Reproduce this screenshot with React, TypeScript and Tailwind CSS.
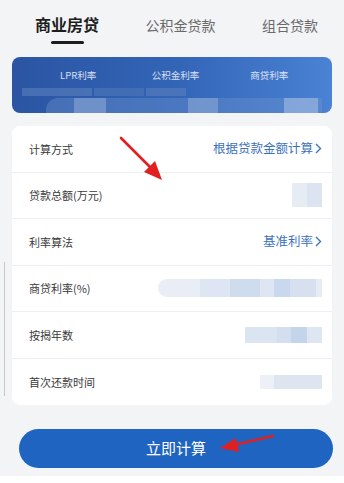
import React from "react";

const rows = [
  { label: "计算方式", value: "根据贷款金额计算", kind: "link" },
  { label: "贷款总额(万元)", kind: "amount" },
  { label: "利率算法", value: "基准利率", kind: "link" },
  { label: "商贷利率(%)", kind: "rate" },
  { label: "按揭年数", kind: "years" },
  { label: "首次还款时间", kind: "date" },
];

const Chevron = () => (
  <svg width="7" height="11" viewBox="0 0 7 11" className="ml-[2px]">
    <path d="M1 1l4.5 4.5L1 10" fill="none" stroke="#3c74c0" strokeWidth="1.4" />
  </svg>
);

const RowValue = ({ kind, value }: { kind: string; value?: string }) => {
  if (kind === "link") {
    return (
      <div className="flex items-center text-[12.5px] text-[#3c72bc]">
        {value}
        <Chevron />
      </div>
    );
  }
  if (kind === "amount") {
    return (
      <div className="flex h-[24px] w-[30px]">
        <div className="flex-1 bg-[#e6ecf4]" />
        <div className="flex-1 bg-[#dbe4f0]" />
      </div>
    );
  }
  if (kind === "rate") {
    return (
      <div className="flex h-[18px] w-[164px] overflow-hidden rounded-l-full">
        <div className="w-[42px] bg-[#e9eef6]" />
        <div className="w-[30px] bg-[#dde6f2]" />
        <div className="w-[30px] bg-[#cfdcee]" />
        <div className="w-[14px] bg-[#dde6f2]" />
        <div className="w-[16px] bg-[#c9d8ec]" />
        <div className="w-[26px] bg-[#d6e0ef]" />
        <div className="flex-1 bg-[#e6ecf5]" />
      </div>
    );
  }
  if (kind === "years") {
    return (
      <div className="flex h-[16px] w-[77px]">
        <div className="w-[32px] bg-[#dbe4f1]" />
        <div className="w-[14px] bg-[#d3def0]" />
        <div className="w-[16px] bg-[#c4d4eb]" />
        <div className="flex-1 bg-[#dde6f2]" />
      </div>
    );
  }
  return (
    <div className="flex h-[14px] w-[62px]">
      <div className="w-[14px] bg-[#edf1f7]" />
      <div className="flex-1 bg-[#dde5f1]" />
    </div>
  );
};

export default function App() {
  return (
    <div
      className="relative h-[483px] w-[344px] overflow-hidden bg-white"
      style={{ fontFamily: '"Noto Sans CJK SC", "Noto Sans", sans-serif' }}
    >
      <div className="bg-[#f3f4f6] pb-[8px]">
        {/* tabs */}
        <div className="flex h-[57px] items-start justify-between pl-[35px] pr-[26px] pt-[13px]">
          <div className="flex flex-col items-center">
            <span className="text-[16px] font-bold leading-[22px] text-[#1e1e1e]">商业房贷</span>
            <span className="mt-[6px] h-[3px] w-[33px] rounded-full bg-[#1e1e1e]" />
          </div>
          <span className="mt-[2px] text-[14px] leading-[20px] text-[#6a6a6a]">公积金贷款</span>
          <span className="mt-[2px] text-[14px] leading-[20px] text-[#6a6a6a]">组合贷款</span>
        </div>

        {/* banner */}
        <div className="mx-3 h-[56px] overflow-hidden rounded-lg bg-gradient-to-r from-[#2b55a3] via-[#3264b6] to-[#4a82d4]">
          <div className="grid grid-cols-3 pt-[11px] text-[9.5px] leading-[14px] text-white/80">
            <span className="pl-[48px]">LPR利率</span>
            <span className="pl-[33px]">公积金利率</span>
            <span className="pl-[25px]">商贷利率</span>
          </div>
          <div className="mt-[6px] flex items-end gap-[2px] pl-[10px] opacity-60">
            <div className="h-[8px] w-[70px] bg-[#5a7fbd]" />
            <div className="h-[8px] w-[50px] bg-[#4f76b8]" />
            <div className="h-[8px] w-[40px] bg-[#5a7fbd]" />
          </div>
          <div className="mt-[2px] flex h-[20px] items-end pl-[34px] pr-[10px]">
            <div className="flex h-full w-full items-end rounded-tl-[12px] bg-[#6f93cc]/40">
              <div className="ml-[28px] h-full w-[32px] bg-[#8ba7d6]/60" />
              <div className="ml-[82px] h-full w-[30px] bg-[#8ba7d6]/60" />
              <div className="ml-[66px] h-full w-[34px] bg-[#a4bce2]/60" />
            </div>
          </div>
        </div>

        {/* form card */}
        <div className="mx-3 mt-[13px] rounded-lg bg-white">
          {rows.map((r, i) => (
            <div
              key={r.label}
              className={`flex h-[46.5px] items-center justify-between pl-[17px] pr-[10px] ${
                i < rows.length - 1 ? "border-b border-[#eeeff1]" : ""
              }`}
            >
              <span className="text-[11px] text-[#3a3a3a]">{r.label}</span>
              <RowValue kind={r.kind} value={r.value} />
            </div>
          ))}
        </div>

        {/* button */}
        <div className="ml-[19px] mr-[11px] mt-[24px]">
          <button className="flex h-[39px] w-full items-center justify-center rounded-full bg-[#1f64c1] text-[15px] text-white">
            立即计算
          </button>
        </div>
      </div>

      {/* screenshot edge line */}
      <div className="absolute left-[4px] top-[262px] h-[134px] w-px bg-[#c8c8c8]" />

      {/* red annotation arrows */}
      <svg className="pointer-events-none absolute left-0 top-0" width="344" height="483">
        <line x1="121" y1="138" x2="152" y2="169" stroke="#e02020" strokeWidth="2.6" strokeLinecap="round" />
        <polygon points="162,180 144,172 155,161" fill="#e02020" />
        <line x1="273" y1="436" x2="234" y2="445" stroke="#e02020" strokeWidth="2.4" strokeLinecap="round" />
        <polygon points="220,448 236,438 239,452" fill="#e02020" />
      </svg>
    </div>
  );
}
